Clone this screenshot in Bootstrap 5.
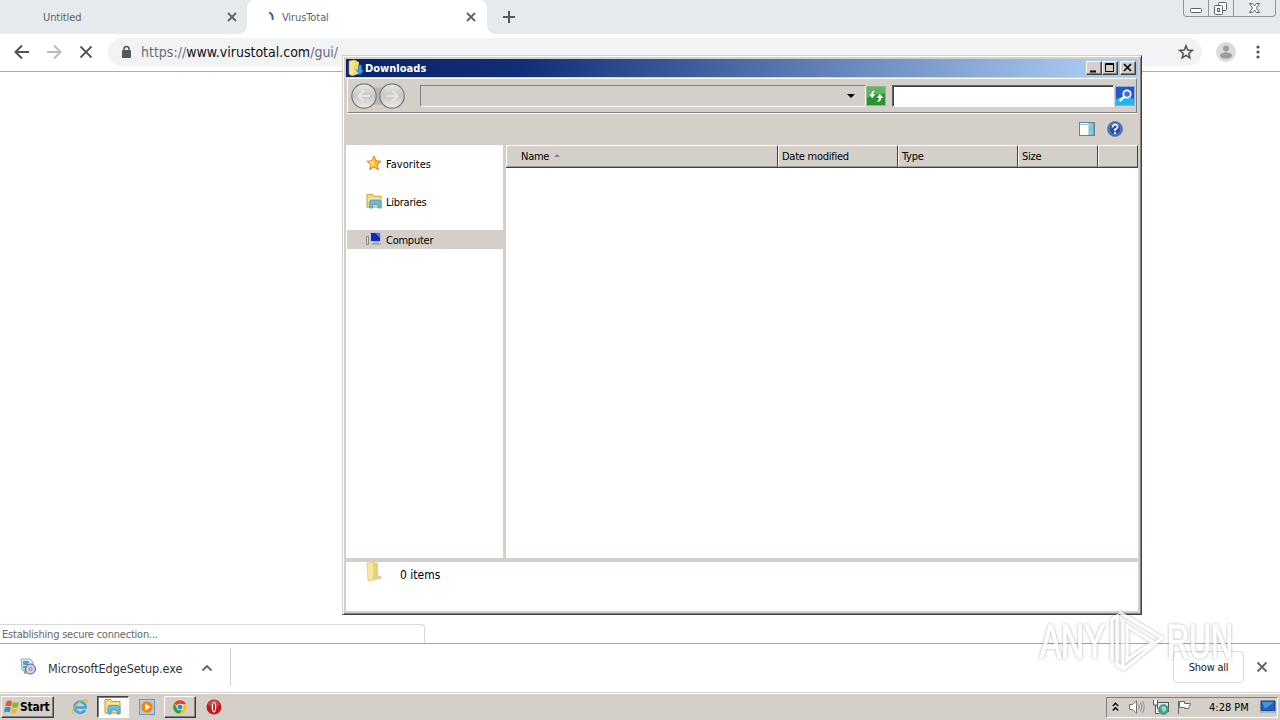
<!DOCTYPE html>
<html lang="en">
<head>
<meta charset="utf-8">
<meta name="viewport" content="width=device-width, initial-scale=1">
<title>Desktop</title>
<link href="https://cdn.jsdelivr.net/npm/bootstrap@5.3.0/dist/css/bootstrap.min.css" rel="stylesheet">
<style>
:root{--face:#d4cfc8}
body{width:1280px;height:720px;font:11px/14px "DejaVu Sans Condensed","DejaVu Sans",sans-serif;color:#000;background:#fff;letter-spacing:-.25px}
svg{display:block;flex:none;overflow:visible}
.tabstrip{height:34px;background:#e7eaed;color:#5f6368}
.tabstrip span{padding-top:1px}
.tab-item{width:240px;height:34px}
.tab-idle{width:247px;padding:0 10px 0 43px;border-bottom-right-radius:8px}
.tab-live{background:#fff;border-radius:8px 8px 0 0;padding:0 11px 0 18px}
.tab-live::before,.tab-live::after{content:"";position:absolute;bottom:0;width:8px;height:8px}
.tab-live::before{left:-8px;background:radial-gradient(circle at 0 0,#e7eaed 7.5px,#fff 8px)}
.tab-live::after{right:-8px;background:radial-gradient(circle at 100% 0,#e7eaed 7.5px,#fff 8px)}
.tab-title{letter-spacing:-.08px}
.caption-group{top:0;right:4px;width:93px;height:17px;border:1px solid #90959a;border-top:0;border-radius:0 0 4px 4px}
.caption-group>div{border-right:1px solid #90959a;height:16px}
.caption-group>div:last-child{border:0}
.toolbar{height:38px;border-bottom:1px solid #a9abae;padding:0 14px 2px}
.omnibox{width:1094px;height:28px;border-radius:14px;background:#f1f3f4;margin-left:14px;padding:0 8px 0 12px}
.url{font-size:14px;line-height:18px;color:#6b6f74;margin-left:9px;letter-spacing:0}
.url b{font-weight:400;color:#111}
.status-bubble{left:0;bottom:0;width:425px;height:19px;border:1px solid #d8d8d8;border-width:1px 1px 0 0;border-radius:0 4px 0 0;color:#666;padding:3px 2px;letter-spacing:-.22px}
.shelf{height:50px;border-top:1px solid #a5a5a5}
.shelf-item{width:231px;height:38px;border-right:1px solid #d0d0d0;padding-left:20px}
.shelf-name{font-size:12.5px;line-height:17px;width:147px;margin-left:12px;color:#333;padding-top:4px;letter-spacing:-.06px}
.show-all{width:71px;height:32px;border:1px solid #dadce0;border-radius:4px;background:#fff;color:#222}
.show-all span{padding-top:2px}
.taskbar{height:27px;background:var(--face);border-top:1px solid #fff;box-shadow:0 -1px #d4d0c8}
.raised{background:var(--face);border:1px solid;border-color:#fff #404040 #404040 #fff;box-shadow:inset -1px -1px #808080}
.start{width:53px;height:22px;font-weight:700;font-size:12px;margin-left:1px;padding-left:2px}
.task{width:32px;height:22px}
.pressed{background:#fbfaf8;border:1px solid;border-color:#404040 #fff #fff #404040;box-shadow:inset 1px 1px #808080}
.tray{width:172px;height:21px;border:1px solid;border-color:#808080 #fff #fff #808080;margin-right:2px;padding-left:5px}
.explorer{left:342px;top:55px;width:800px;height:560px;background:var(--face);border:1px solid;border-color:#d4d0c8 #404040 #404040 #d4d0c8;box-shadow:inset 1px 1px #fff,inset -1px -1px #808080;padding:3px 3px 3px 3px}
.titlebar{height:18px;background:linear-gradient(90deg,#0a246a,#0f2f78 22%,#a6caf0 94%);color:#fff;font-weight:700;padding:0 2px}
.title-text{margin-left:1px;padding-top:1px;letter-spacing:.03px}
.titlebar .raised{width:16px;height:14px}
.navrow{height:35px;border:1px solid;border-color:#fff #808080 #808080 #fff;box-shadow:0 1px #fff;margin:1px 1px 0;padding-left:3px}
.address{width:446px;height:22px;border:1px solid;border-color:#808080 #fff #fff #808080;margin-left:15px;padding-right:10px}
.search{width:222px;height:22px;background:#fff;border:1px solid;border-color:#606060 #fff #fff #606060;box-shadow:inset 1px 1px #404040;margin:0 1px 0 6px}
.cmdrow{height:32px;padding-right:15px}
.sidebar{width:157px;background:#fff;padding-top:9px}
.place{height:19px;padding-left:19px;margin-left:1px;margin-bottom:19px}
.place span{padding-top:2px}
.place svg{position:relative;top:-1px}
.place.active{background:var(--face)}
.files{background:#fff;margin-left:3px}
.colhead{height:23px;background:var(--face);border-bottom:1px solid #404040}
.colhead>div{border-right:1px solid #404040;border-left:1px solid #fff;border-top:1px solid #fff;box-shadow:inset 0 -1px #a09c94;padding:4px 0 0 3px}
.details{height:49px;background:#fff;margin-top:4px;padding-left:20px}
.items-text{margin:6px 0 0 16px;font-size:12px;letter-spacing:0}
.watermark{left:1036px;top:606px;z-index:5;opacity:.82}
</style>
</head>
<body class="d-flex flex-column overflow-hidden position-relative m-0">

<header class="tabstrip d-flex position-relative flex-shrink-0">
  <div class="tab-item tab-idle d-flex align-items-center justify-content-between"><span class="tab-title">Untitled</span>
    <svg width="10" height="10" viewBox="0 0 10 10" stroke="#5f6368" stroke-width="1.8"><path d="M1 1l8 8M9 1L1 9"/></svg></div>
  <div class="tab-item tab-live position-relative d-flex align-items-center">
    <svg width="12" height="14" viewBox="0 0 12 14" fill="none" stroke="#2a66b8" stroke-width="2"><path d="M4 2.500Q8.500 4 7.500 10"/></svg>
    <span class="tab-title ms-1 ps-0 flex-grow-1">&#8202;VirusTotal</span>
    <svg width="10" height="10" viewBox="0 0 10 10" stroke="#5f6368" stroke-width="1.8"><path d="M1 1l8 8M9 1L1 9"/></svg></div>
  <svg class="align-self-center" style="margin-left:16px" width="12" height="12" viewBox="0 0 12 12" stroke="#55595e" stroke-width="2"><path d="M0 6h12M6 0v12"/></svg>
  <div class="caption-group position-absolute d-flex">
    <div style="width:25px"><svg width="24" height="16" fill="#fff" stroke="#5d6268"><rect x="6.500" y="8.500" width="11" height="4" rx="1"/></svg></div>
    <div style="width:25px"><svg width="24" height="16" fill="#fff" stroke="#5d6268"><rect x="9.500" y="2.500" width="8" height="8" rx="1"/><rect x="5.500" y="5.500" width="8" height="9" rx="1"/><rect x="8.500" y="8.500" width="2" height="3"/></svg></div>
    <div class="flex-grow-1"><svg width="41" height="16" fill="#fff" stroke="#5d6268"><path d="M15.500 3.500h3l2 2.500 2-2.500h3l-3 4.500 3 4.500h-3l-2-2.500-2 2.500h-3l3-4.500z"/></svg></div>
  </div>
</header>

<nav class="toolbar d-flex align-items-center flex-shrink-0">
  <svg width="16" height="16" viewBox="0 0 16 16" fill="none" stroke="#505357" stroke-width="2"><path d="M15 8H2M8 1.500L1.500 8 8 14.500"/></svg>
  <svg width="16" height="16" style="margin-left:16px" viewBox="0 0 16 16" fill="none" stroke="#b9bbbd" stroke-width="2"><path d="M1 8h13M8 1.500L14.500 8 8 14.500"/></svg>
  <svg width="16" height="16" style="margin-left:16px" viewBox="0 0 16 16" fill="none" stroke="#505357" stroke-width="1.800"><path d="M2.500 2.500l11 11M13.500 2.500l-11 11"/></svg>
  <div class="omnibox d-flex align-items-center">
    <svg width="12" height="14" viewBox="0 0 12 14"><rect x="2" y="5" width="9" height="8" rx="1" fill="#55595e"/><path d="M4 6V4a2.500 2.500 0 0 1 5 0v2" fill="none" stroke="#55595e" stroke-width="1.500"/></svg>
    <span class="url flex-grow-1">https://<b>www.virustotal.com</b>/gui/</span>
    <svg width="16" height="16" viewBox="0 0 16 16" fill="none" stroke="#505357" stroke-width="1.500"><path d="M8 1.800l1.700 4.300 4.600.3-3.500 3 1.100 4.500L8 11.400l-3.900 2.500 1.100-4.500-3.500-3 4.600-.3z"/></svg>
  </div>
  <svg width="20" height="20" style="margin-left:14px" viewBox="0 0 20 20"><circle cx="10" cy="10" r="10" fill="#dcdcdc"/><circle cx="10" cy="6.500" r="3" fill="#9d9d9d"/><ellipse cx="10" cy="13.500" rx="6" ry="3.200" fill="#9d9d9d"/></svg>
  <svg width="4" height="16" style="margin-left:20px" viewBox="0 0 4 16" fill="#505357"><circle cx="2" cy="3" r="1.600"/><circle cx="2" cy="8" r="1.600"/><circle cx="2" cy="13" r="1.600"/></svg>
</nav>

<main class="flex-grow-1 position-relative">
  <div class="status-bubble position-absolute">Establishing secure connection...</div>
</main>

<footer class="shelf d-flex align-items-center flex-shrink-0 pb-1">
  <div class="shelf-item d-flex align-items-center">
    <svg width="16" height="16" viewBox="0 0 16 16"><path d="M1 0h9l3 3v8H2z" fill="#d9eef4" stroke="#8fa8bb"/><path d="M3 3h6M3 5h5M3 8h4" stroke="#2f87ad" stroke-width="1.500"/><circle cx="10.500" cy="10" r="5" fill="#cbd4ee" stroke="#4d5794"/><circle cx="10.500" cy="10" r="1.500" fill="#fff" stroke="#6874af"/><path d="M3 10l5 4-4 1z" fill="#82bb68"/></svg>
    <span class="shelf-name">MicrosoftEdgeSetup.exe</span>
    <svg width="10" height="6" style="margin:2px 0 0 7px" viewBox="0 0 10 6" fill="none" stroke="#5f6368" stroke-width="1.800"><path d="M.5 5.500L5 1l4.500 4.500"/></svg>
  </div>
  <div class="show-all ms-auto d-flex align-items-center justify-content-center"><span>Show all</span></div>
  <svg width="10" height="10" style="margin:0 13px" viewBox="0 0 10 10" stroke="#5f6368" stroke-width="1.800"><path d="M.5.5l9 9M9.500.5l-9 9"/></svg>
</footer>

<div class="taskbar d-flex align-items-center flex-shrink-0">
  <div class="start raised d-flex align-items-center">
    <svg width="16" height="16" viewBox="0 0 16 16"><path d="M2.500 2.500Q5 .5 8 2.500L7 7.500Q4 6 1.300 7.500z" fill="#e8572b"/><path d="M9 3q3 1.500 6 0l-1.300 5q-3 1.500-5.700 0z" fill="#7dbb3c"/><path d="M1 8.500q3-1.500 5.700 0l-1 5Q3 12 0 13.500z" fill="#3c8bd9"/><path d="M7.700 9q3 1.500 5.700 0l-1.300 5q-3 1.500-5.400 0z" fill="#f4b920"/></svg>
    <span>Start</span></div>
  <svg width="18" height="18" style="margin-left:17px" viewBox="0 0 18 18" fill="none"><path d="M14 11.800A5.600 5.600 0 1 1 14.600 9.500H5" stroke="#42a5df" stroke-width="2.600"/><path d="M2.500 16C-1 13 8 2 14.500 1.800q2.500.2 1 3.200" stroke="#e5b638" stroke-width="1.300"/></svg>
  <div class="task pressed" style="margin-left:8px"><svg width="30" height="20" viewBox="-6 -1 30 20"><use href="#lib"/></svg></div>
  <svg width="16" height="16" style="margin-left:10px" viewBox="0 0 16 16"><rect x=".5" y=".5" width="15" height="15" fill="#a9cdec" stroke="#639bcb"/><circle cx="8" cy="8" r="6" fill="#f58212" stroke="#fbb35b"/><path d="M6 4.500L11.500 8 6 11.500z" fill="#fff"/></svg>
  <div class="task raised d-flex align-items-center justify-content-center" style="margin-left:9px">
    <svg width="14" height="14" viewBox="0 0 14 14"><circle cx="7" cy="7" r="6.800" fill="#f4c51e"/><path d="M7 7L1 3.700A6.800 6.800 0 0 1 13 4H7z" fill="#dc4437"/><path d="M1 3.700A6.800 6.800 0 0 0 6.500 13.800L9.500 9 7 7 4 8z" fill="#2ca052"/><circle cx="7" cy="7" r="3.300" fill="#fff"/><circle cx="7" cy="7" r="2.500" fill="#3c7edc"/></svg></div>
  <svg width="16" height="16" style="margin-left:10px" viewBox="0 0 16 16"><circle cx="8" cy="8" r="7.500" fill="#bd1c1b"/><path d="M2 6a6 5 0 0 1 12 0q-6 3-12 0z" fill="#e46a62" opacity=".5"/><ellipse cx="8" cy="8" rx="2.300" ry="5.500" fill="#fff"/><ellipse cx="8" cy="8" rx="1" ry="4.500" fill="#b3302a"/></svg>
  <div class="tray ms-auto d-flex align-items-center">
    <svg width="7" height="10" viewBox="0 0 7 10" fill="none" stroke="#000" stroke-width="1.400"><path d="M.8 4l2.700-2.700L6.200 4M.8 8.500l2.700-2.700 2.700 2.700"/></svg>
    <svg width="16" height="14" style="margin-left:10px" viewBox="0 0 16 14" fill="none" stroke="#73706d"><path d="M.5 4.500h3L7.500.8v12.400l-4-3.700h-3z" fill="#fff"/><path d="M9.500 4.500q1.500 2.500 0 5M11.500 2.500q3 4.500 0 9M13.500 1q3.500 6 0 12" stroke="#908d89"/></svg>
    <svg width="16" height="16" style="margin-left:8px" viewBox="0 0 16 16"><rect x="4.500" y="3.500" width="11" height="9" fill="#dce9ed" stroke="#555"/><path d="M.5 1v5h4V1M2.500 6v8.500h4" fill="#fff" stroke="#555"/><circle cx="10.500" cy="10.500" r="4.800" fill="#42a78c" stroke="#3a8097"/><path d="M8 8q4-2 5 1t-3 4z" fill="#9bdbb5"/></svg>
    <svg width="16" height="16" style="margin-left:7px" viewBox="0 0 16 16" fill="#fff" stroke="#6b6866"><path d="M2.500 2v13"/><path d="M3.500 2.500h5v2h6l-2 5h-4v-1h-5z"/></svg>
    <span style="margin:1px 0 0 17px;width:41px;letter-spacing:0">4:28&nbsp;PM</span>
    <svg width="16" height="14" style="margin-left:10px" viewBox="0 0 16 14"><path d="M1 1h14v10H1z" fill="#2360b8" stroke="#163c7c"/><path d="M2 2h12L5 9z" fill="#4b91df"/><path d="M0 12h16" stroke="#9fb5ca" stroke-width="2"/></svg>
  </div>
</div>

<section class="explorer position-absolute d-flex flex-column">
  <div class="titlebar d-flex align-items-center">
    <svg width="16" height="16" viewBox="0 0 16 16"><path d="M1 1l5-1 3 1v13l-5 2-3-2z" fill="#f6e59c" stroke="#b9994d" stroke-width=".6"/><path d="M6 1l5 1v12l-6 1z" fill="#f2d86e"/><path d="M10.500 5h3v5h2L12 15 8.500 10h2z" fill="#31a3e6" stroke="#176fad" stroke-width=".6"/></svg>
    <span class="flex-grow-1 title-text">Downloads</span>
    <div class="raised"><svg width="14" height="12"><path d="M3 9.500h6" stroke="#000" stroke-width="2"/></svg></div>
    <div class="raised"><svg width="14" height="12" fill="none" stroke="#000"><path d="M2.500 1.500h8v8h-8zM2 2.500h9"/></svg></div>
    <div class="raised" style="margin-left:2px"><svg width="14" height="12" stroke="#000" stroke-width="1.600"><path d="M3 2l7 7M10 2l-7 7"/></svg></div>
  </div>
  <div class="navrow d-flex align-items-center">
    <svg width="54" height="28" viewBox="0 0 54 28">
      <defs><linearGradient id="orb" x2="0" y2="1"><stop stop-color="#e9e8e6"/><stop offset=".5" stop-color="#c9c7c4"/><stop offset="1" stop-color="#eeedeb"/></linearGradient></defs>
      <path d="M13 3q14 5 28 0v22q-14-5-28 0z" fill="#bab7b3"/>
      <g fill="url(#orb)" stroke="#77767a" stroke-width="1.200"><circle cx="13" cy="14" r="12.200"/><circle cx="41" cy="14" r="12.200"/></g>
      <path d="M19 14H8M13 8.500L7.500 14l5.500 5.500M35 14h11M41 8.500l5.500 5.500-5.500 5.500" fill="none" stroke="#e6e5e3" stroke-width="2.200"/></svg>
    <div class="address d-flex align-items-center justify-content-end"><svg width="8" height="4"><path d="M0 0h8L4 4z"/></svg></div>
    <svg width="20" height="20" viewBox="0 0 20 20"><rect x=".5" y=".5" width="19" height="19" fill="#279431" stroke="#8bbd8b"/><path d="M1 1h18v7Q10 7 1 12z" fill="#62b565"/><path d="M10 4Q5 4 4.800 8H2.300l3.900 4.500L10 8H7.600Q7.800 5.800 10 4zM10.500 16.500q5-.5 5-4.500H18l-4.200-4.500L10 12h2.700q0 2.500-2.200 4.500z" fill="#fff" stroke="#238028" stroke-width=".5"/></svg>
    <div class="search"></div>
    <svg width="20" height="20" viewBox="0 0 20 20"><rect x=".5" y=".5" width="19" height="19" fill="#2656c8" stroke="#8aace0"/><path d="M1 13q9-5 18 0v6H1z" fill="#20b5ee"/><circle cx="12" cy="8" r="3.700" fill="#3970df" stroke="#fff" stroke-width="1.800"/><path d="M9 11l-4.500 4" stroke="#fff" stroke-width="2.500"/></svg>
  </div>
  <div class="cmdrow d-flex align-items-center justify-content-end">
    <svg width="16" height="14" viewBox="0 0 16 14"><rect x=".5" y=".5" width="15" height="13" fill="#fff" stroke="#688098"/><path d="M1 2.500h9" stroke="#94bfda"/><path d="M10 1h5v12h-5z" fill="#55aecd"/><path d="M9.500 1v12M11 2h2v10h-2z" stroke="#b9dbe7" fill="none"/></svg>
    <svg width="16" height="16" style="margin-left:12px" viewBox="0 0 16 16"><circle cx="8" cy="8" r="7.500" fill="#2450b0" stroke="#7885a9"/><circle cx="8" cy="8" r="6" fill="none" stroke="#7590d5"/><path d="M5.500 6.500q0-3 2.700-2.800 3 .3 2.300 2.700Q10 7.500 8 8.500V10M8 11v2" fill="none" stroke="#fff" stroke-width="1.700"/></svg>
  </div>
  <div class="d-flex flex-grow-1">
    <div class="sidebar">
      <div class="place d-flex align-items-center"><svg width="16" height="16" viewBox="0 0 16 16"><path d="M8 .8l2 5 5.200.4-4 3.400 1.300 5.200L8 12l-4.500 2.800 1.300-5.200-4-3.400L6 5.800z" fill="#fdb92e" stroke="#d98b27"/><path d="M8 3v7l-3.500 2 1-3-3-2.500 4-.2z" fill="#ffe36c"/></svg><span class="ms-1" style="letter-spacing:.05px">Favorites</span></div>
      <div class="place d-flex align-items-center"><svg width="16" height="16" viewBox="0 0 17 17"><g id="lib"><path d="M1 1.500h6l1.500 2H16V15H1z" fill="#f2d978" stroke="#c0a14c"/><path d="M3 5.500h12M2 7.500h14" stroke="#fff0a5"/><path d="M4 16V9.500q0-2 2-2h8q2 0 2 2V16h-3v-4H7v4z" fill="#6cbce9" stroke="#438dbb" stroke-width=".8"/></g></svg><span class="ms-1">Libraries</span></div>
      <div class="place active d-flex align-items-center"><svg width="16" height="14" viewBox="0 0 16 14"><path d="M.5 4.500h2v8h-2z" fill="#ddd" stroke="#888"/><path d="M4.500.5h10v9h-10z" fill="#102cb5" stroke="#c1c4d2"/><path d="M9 1h5v5z" fill="#4874ea"/><path d="M7 10h6v1.500h2v1.500H5z" fill="#a5abb5"/></svg><span class="ms-1">Computer</span></div>
    </div>
    <div class="files flex-grow-1">
      <div class="colhead d-flex">
        <div class="d-flex" style="width:272px;padding-left:14px"><span>Name</span><svg width="6" height="3" style="margin:4px 0 0 5px"><path d="M0 3h6L3 0z" fill="#858585"/></svg></div>
        <div style="width:120px">Date modified</div><div style="width:120px">Type</div><div style="width:80px">Size</div><div class="flex-grow-1"></div>
      </div>
    </div>
  </div>
  <div class="details d-flex align-items-start">
    <svg width="18" height="20" viewBox="0 0 18 20"><path d="M1 1l6-1 1 18-6 1z" fill="#f5e89e" stroke="#dcc66e" stroke-width=".7"/><path d="M7 0l5 1v16l-5 1z" fill="#ead271"/><path d="M12 13l4 2-1 2-8 1z" fill="#d8d0ad"/></svg>
    <span class="items-text">0 items</span>
  </div>
</section>

<svg class="watermark position-absolute pe-none" width="200" height="72" viewBox="0 0 200 72">
  <defs><filter id="soft" x="-10%" y="-20%" width="120%" height="140%"><feDropShadow dx="0" dy="0" stdDeviation="1.800" flood-color="#666" flood-opacity=".65"/></filter></defs>
  <g filter="url(#soft)" fill="#fff" stroke="#fff" font-family="Liberation Sans" font-size="48">
    <text x="4" y="52" textLength="65" lengthAdjust="spacingAndGlyphs">ANY</text>
    <text x="131" y="52" textLength="66" lengthAdjust="spacingAndGlyphs">RUN</text>
    <path d="M76 55V13l5-3v48l6 4V14M83 6l43 26-38 31-8-4M91 20l26 16-26 18z" fill="none" stroke-width="3"/>
  </g>
</svg>
<script src="https://cdn.jsdelivr.net/npm/bootstrap@5.3.0/dist/js/bootstrap.bundle.min.js"></script>
</body>
</html>
